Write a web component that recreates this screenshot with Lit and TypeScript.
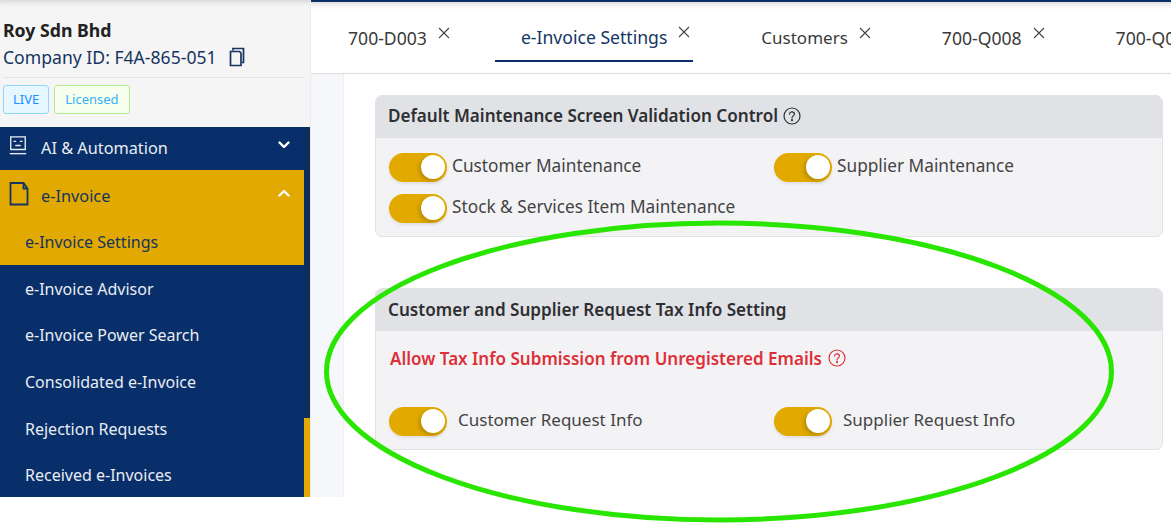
import { LitElement, html, css, svg } from "lit";
import { customElement } from "lit/decorators.js";

const chevron = (up: boolean) => html`<svg class="chev" width="14" height="14" viewBox="0 0 14 14" fill="none" stroke="#fff" stroke-width="2.4" stroke-linecap="round" stroke-linejoin="round"><path d=${up ? "M2.5 9.5 7 5l4.500 4.500" : "M2.500 4.500 7 9l4.500-4.500"}></path></svg>`;
const help = () => html`<svg width="18" height="18" viewBox="0 0 18 18" fill="none" stroke="currentColor" stroke-width="1.200"><circle cx="9" cy="9" r="8"></circle><path d="M6.600 7.100c0-1.400 1.100-2.300 2.400-2.300s2.400.9 2.400 2.200c0 1.900-2.400 1.900-2.400 3.900" stroke-linecap="round"></path><circle cx="9" cy="13.200" r=".5" fill="currentColor"></circle></svg>`;
const closeX = html`<svg class="x" width="12" height="12" viewBox="0 0 12 12" stroke="#444" stroke-width="1.100" fill="none"><path d="M1 1l10 10M11 1 1 11"></path></svg>`;

@customElement("app-root")
export class AppRoot extends LitElement {
  static styles = css`
    :host { display: block; position: relative; width: 1171px; height: 523px; overflow: hidden; background: #fff; font-family: "Noto Sans", sans-serif; font-size: 17px; color: #333; }
    .frame { display: flex; height: 497px; }
    .side { width: 310px; flex: none; display: flex; flex-direction: column; background: #f5f5f5; border-right: 1px solid #f1e9ec; }
    .company { height: 127px; box-sizing: border-box; padding: 18px 0 0 3px; box-shadow: inset 0 6px 5px -4px #d4d4d4; }
    .name { font-weight: 700; font-size: 17.700px; line-height: 24px; color: #222; }
    .cid { display: flex; align-items: center; font-size: 17.600px; line-height: 30px; color: #16345f; gap: 12px; height: 30px; }
    .rule { height: 1px; background: #e3e3e3; width: 300px; margin-top: 5px; }
    .badges { display: flex; gap: 5px; margin-top: 7px; }
    .badge { height: 29px; box-sizing: border-box; border-radius: 3px; font-size: 13px; line-height: 27px; padding: 0 9px; color: #1890ff; }
    .live { background: #e6f7ff; border: 1px solid #91d5ff; }
    .lic { background: #f6ffed; border: 1px solid #b7eb8f; color: #36b0fa; padding: 0 10px; }
    .navwrap { flex: 1; display: flex; min-height: 0; background: #082f69; }
    .nav { width: 304px; flex: none; color: #e9edf3; font-size: 16px; }
    .bar { width: 6px; display: flex; flex-direction: column; background: #0a2c5e; }
    .bar i { flex: 1; }
    .bar b { height: 79px; background: #e2aa00; }
    .head { display: flex; align-items: center; height: 41px; margin-bottom: 2px; padding: 0 13px 0 8px; }
    .head .t { flex: 1; font-size: 16.300px; }
    .ai { margin-left: 13px; }
    .inv { margin-left: 12px; }
    .active { background: #e2aa00; color: #16345f; height: 95px; }
    .active .head { height: 52px; margin: 0; }
    .item { display: flex; align-items: center; height: 46.700px; padding-left: 25px; }
    .nav > .item { position: relative; top: .25px; }
    .active .item { height: 43px; padding-bottom: 3px; box-sizing: border-box; }
    .i1 { margin-top: -6px; }
    .i2 { margin: -4px 0 0 1px; }
    .chev { margin-top: -6px; }
    .main { flex: 1; min-width: 0; display: flex; flex-direction: column; }
    .tabs { height: 74px; box-sizing: border-box; border-top: 2px solid #082f69; border-bottom: 1px solid #dcdcdc; display: flex; gap: 42px; padding-left: 11px; overflow: hidden; box-shadow: inset 0 7px 7px -6px #ccc; white-space: nowrap; }
    .tab { display: flex; flex: none; align-items: center; height: 60px; padding: 11px 3px 0 26px; box-sizing: border-box; color: #3a3a3a; font-size: 17.600px; }
    .tab .x { margin: -9px 0 0 11px; }
    .tab.on { color: #123665; border-bottom: 2px solid #082f69; }
    .tab.tight { font-size: 17px; }
    .body { flex: 1; display: flex; min-height: 0; }
    .gutter { width: 32px; background: #f5f7fb; border-right: 1px solid #eceef2; }
    .content { flex: 1; padding: 21px 8px 0 31px; display: flex; flex-direction: column; gap: 51px; }
    .card { background: #f3f3f6; border: 1px solid #e1e2e5; border-radius: 7px; overflow: hidden; box-sizing: border-box; }
    .card .hd { height: 42px; background: #e1e2e5; display: flex; align-items: center; gap: 5px; padding: 0 0 3px 12px; box-sizing: border-box; font-weight: 600; color: #2d2f33; font-size: 17.100px; }
    .c1 { height: 142px; }
    .c2 { height: 162px; }
    .c2 .hd { padding-bottom: 1px; }
    .grid { display: grid; grid-template-columns: 385px 1fr; padding: 15px 0 0 13px; row-gap: 11px; }
    .opt { display: flex; align-items: center; gap: 5px; height: 30px; color: #444; line-height: 26px; }
    .lbl { padding-bottom: 3px; font-size: 17.250px; }
    .c2 .opt { gap: 11px; }
    .sw { width: 58px; height: 29px; border-radius: 15px; background: #e2aa00; position: relative; flex: none; box-shadow: 0 2px 3px rgba(0,0,0,.08); }
    .sw::after { content: ""; position: absolute; right: 2px; top: 2px; width: 24px; height: 24px; border-radius: 50%; background: #fff; box-shadow: -2px 2px 4px rgba(0,0,0,.2); }
    .grid.g1 { padding-top: 14px; }
    .warn { display: flex; align-items: center; gap: 6px; color: #dc3038; font-weight: 600; padding: 15px 0 0 14px; height: 24px; font-size: 17.050px; }
    .warn + .grid { padding-top: 36px; }
    .c2 .lbl { padding-bottom: 2px; font-size: 17px; }
    .ring { position: absolute; left: 0; top: 0; pointer-events: none; }
  `;

  render() {
    const tabs = ["700-D003", "e-Invoice Settings", "Customers", "700-Q008", "700-Q009"];
    return html`
      <div class="frame">
        <aside class="side">
          <div class="company">
            <div class="name">Roy Sdn Bhd</div>
            <div class="cid">Company ID: F4A-865-051
              <svg width="16" height="20" viewBox="0 0 16 20" fill="none" stroke="#16345f" stroke-width="1.700"><path d="M4 3.500V1.500h10.500V15.500H13"></path><path d="M1.500 4.500h9l1.500 1.500v12.500H1.500z"></path></svg>
            </div>
            <div class="rule"></div>
            <div class="badges"><span class="badge live">LIVE</span><span class="badge lic">Licensed</span></div>
          </div>
          <div class="navwrap">
            <nav class="nav">
              <div class="head">
                <svg class="i1" width="20" height="24" viewBox="0 0 22 24" fill="none" stroke="#e9edf3" stroke-width="1.500"><path d="M3 3h16v14H3z"></path><path d="M2 21.500h18"></path><path d="M6 8h3M13 8h3M8 12.500h6"></path></svg>
                <span class="t ai">AI &amp; Automation</span>${chevron(false)}
              </div>
              <div class="active">
                <div class="head">
                  <svg class="i2" width="20" height="24" viewBox="0 0 20 24" fill="none" stroke="#16345f" stroke-width="1.800"><path d="M1.500 1h13l4 5.500V22.500H1.500z"></path><path d="M14.500 1v5.500h4"></path></svg>
                  <span class="t inv">e-Invoice</span>${chevron(true)}
                </div>
                <div class="item">e-Invoice Settings</div>
              </div>
              ${["e-Invoice Advisor", "e-Invoice Power Search", "Consolidated e-Invoice", "Rejection Requests", "Received e-Invoices"].map((t) => html`<div class="item">${t}</div>`)}
            </nav>
            <div class="bar"><i></i><b></b></div>
          </div>
        </aside>
        <main class="main">
          <div class="tabs">
            ${tabs.map((t, i) => html`<div class="tab ${i === 1 ? "on" : ""} ${i === 2 ? "tight" : ""}">${t}${closeX}</div>`)}
          </div>
          <div class="body">
            <div class="gutter"></div>
            <div class="content">
              <section class="card c1">
                <div class="hd">Default Maintenance Screen Validation Control ${help()}</div>
                <div class="grid g1">
                  <div class="opt"><span class="sw"></span><span class="lbl">Customer Maintenance</span></div>
                  <div class="opt"><span class="sw"></span><span class="lbl">Supplier Maintenance</span></div>
                  <div class="opt"><span class="sw"></span><span class="lbl">Stock &amp; Services Item Maintenance</span></div>
                </div>
              </section>
              <section class="card c2">
                <div class="hd">Customer and Supplier Request Tax Info Setting</div>
                <div class="warn">Allow Tax Info Submission from Unregistered Emails ${help()}</div>
                <div class="grid">
                  <div class="opt"><span class="sw"></span><span class="lbl">Customer Request Info</span></div>
                  <div class="opt"><span class="sw"></span><span class="lbl">Supplier Request Info</span></div>
                </div>
              </section>
            </div>
          </div>
        </main>
      </div>
      <svg class="ring" width="1171" height="523" fill="none">${svg`<ellipse cx="719" cy="371.500" rx="392.500" ry="148.500" stroke="#29e600" stroke-width="5"></ellipse>`}</svg>
    `;
  }
}
